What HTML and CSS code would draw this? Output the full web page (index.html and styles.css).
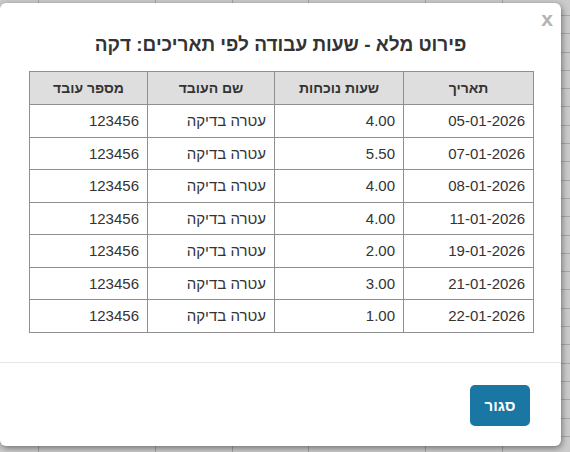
FILE: index.html
```html
<!DOCTYPE html>
<html lang="he" dir="rtl">
<head>
<meta charset="utf-8">
<title>פירוט מלא</title>
<link rel="stylesheet" href="styles.css">
</head>
<body>
<div class="modal">
  <div class="modal-header">
    <span class="close">x</span>
    <h2 class="modal-title">פירוט מלא - שעות עבודה לפי תאריכים: דקה</h2>
  </div>
  <div class="modal-body">
    <table class="report">
      <colgroup>
        <col class="c-date"><col class="c-hours"><col class="c-name"><col class="c-num">
      </colgroup>
      <thead>
        <tr><th>תאריך</th><th>שעות נוכחות</th><th>שם העובד</th><th>מספר עובד</th></tr>
      </thead>
      <tbody>
        <tr><td>05-01-2026</td><td>4.00</td><td>עטרה בדיקה</td><td>123456</td></tr>
        <tr><td>07-01-2026</td><td>5.50</td><td>עטרה בדיקה</td><td>123456</td></tr>
        <tr><td>08-01-2026</td><td>4.00</td><td>עטרה בדיקה</td><td>123456</td></tr>
        <tr><td>11-01-2026</td><td>4.00</td><td>עטרה בדיקה</td><td>123456</td></tr>
        <tr><td>19-01-2026</td><td>2.00</td><td>עטרה בדיקה</td><td>123456</td></tr>
        <tr><td>21-01-2026</td><td>3.00</td><td>עטרה בדיקה</td><td>123456</td></tr>
        <tr><td>22-01-2026</td><td>1.00</td><td>עטרה בדיקה</td><td>123456</td></tr>
      </tbody>
    </table>
  </div>
  <div class="modal-footer">
    <button class="btn-close" type="button">סגור</button>
  </div>
</div>
</body>
</html>
```
FILE: styles.css
```css
html, body {
  margin: 0;
  padding: 0;
}
body {
  width: 570px;
  height: 452px;
  overflow: hidden;
  font-family: "Liberation Sans", Arial, sans-serif;
  color: #333;
  background-color: #cbcbcb;
  background-image:
    linear-gradient(to right,
      transparent 0 38px, #a3a3a3 38px 39px,
      transparent 39px 155px, #a3a3a3 155px 156px,
      transparent 156px 232px, #a3a3a3 232px 233px,
      transparent 233px 308px, #a3a3a3 308px 309px,
      transparent 309px 425px, #a3a3a3 425px 426px,
      transparent 426px 502px, #a3a3a3 502px 503px,
      transparent 503px),
    repeating-linear-gradient(to bottom, transparent 0 15px, #a8a8a8 15px 16px, transparent 16px 18.3px);
}
.modal {
  direction: rtl;
  margin: 3px 9px 0 0;
  height: 443px;
  box-sizing: border-box;
  background: #fff;
  border-radius: 6px;
  box-shadow: 1px 2px 6px rgba(0, 0, 0, 0.45);
  display: flex;
  flex-direction: column;
}
.modal-header {
  position: relative;
  padding: 31px 0 0;
  text-align: center;
}
.close {
  position: absolute;
  top: 4px;
  right: 8px;
  font-size: 21px;
  font-weight: bold;
  color: #b3b3b3;
  line-height: 24px;
}
.modal-title {
  margin: 0;
  font-size: 19px;
  line-height: 22px;
  font-weight: bold;
  color: #333;
}
.modal-body {
  padding: 15px 27px 29px 30px;
  border-bottom: 1px solid #e5e5e5;
}
.report {
  border-collapse: collapse;
  width: 504px;
  table-layout: fixed;
  font-size: 15px;
}
.c-date { width: 130px; }
.c-hours { width: 129px; }
.c-name { width: 127px; }
.c-num { width: 118px; }
.report th,
.report td {
  border: 1px solid #8f8f8f;
  padding: 0 8px;
  white-space: nowrap;
}
.report th {
  height: 32px;
  background: #dedede;
  font-size: 14px;
  font-weight: bold;
  text-align: center;
  color: #333;
}
.report td {
  height: 31.5px;
  text-align: right;
  color: #333;
}
.modal-footer {
  display: flex;
  justify-content: flex-start;
  padding: 22px 31px 0;
}
.btn-close {
  width: 60px;
  height: 41px;
  border: none;
  border-radius: 5px;
  background: #1a76a2;
  color: #fff;
  font-family: "Liberation Sans", Arial, sans-serif;
  font-size: 15px;
  font-weight: bold;
  padding: 0;
}
```
